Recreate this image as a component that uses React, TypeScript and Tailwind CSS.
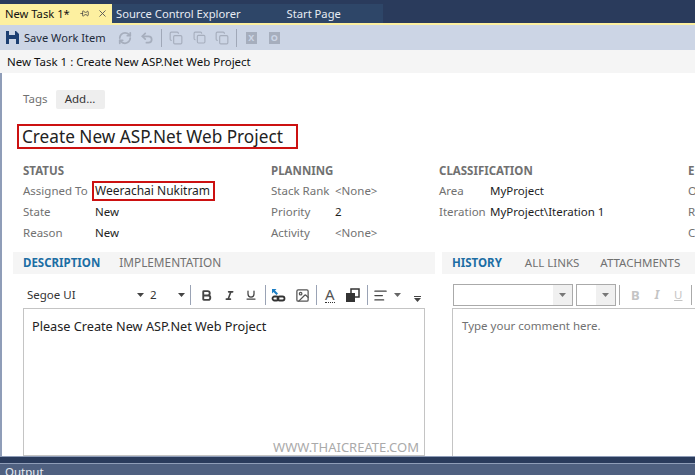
import React from "react";
import { Undo2, RefreshCw, Pin, X, Copy, Image, AlignLeft, Bold, Italic, Underline } from "lucide-react";

const Caret = ({ c = "#444" }: { c?: string }) => (
  <svg width="7" height="4" viewBox="0 0 7 4"><path d="M0 0h7L3.5 4z" fill={c} /></svg>
);
const Sep = ({ c = "#9aa3b5" }: { c?: string }) => <div className="w-px h-[20px]" style={{ background: c }} />;

const Field = ({ l, v, w, muted }: { l: string; v: string; w: string; muted?: boolean }) => (
  <div className="flex items-center h-[21px]">
    <span className={`${w} text-[#717171] shrink-0`}>{l}</span>
    <span className={muted ? "text-[#717171]" : "text-[#1e1e1e]"}>{v}</span>
  </div>
);

const Stack = () => (
  <svg width="15" height="15" viewBox="0 0 15 15" className="ml-[5px]">
    <path d="M1 1h4.5l-1.5 1.5 3 3-1.5 1.5-3-3L1 5.500z" fill="#1c7ec4" />
    <rect x="1.500" y="8.500" width="6" height="4" rx="2" fill="none" stroke="#333" strokeWidth="1.800" />
    <rect x="6.500" y="8.500" width="7" height="4" rx="2" fill="none" stroke="#333" strokeWidth="1.800" />
  </svg>
);

const Layers = () => (
  <svg width="14" height="14" viewBox="0 0 14 14" className="ml-[11px]">
    <rect x="5" y="1" width="8" height="8" fill="#fff" stroke="#333" strokeWidth="1.500" />
    <rect x="0" y="5" width="9" height="9" fill="#333" />
  </svg>
);

export default function App() {
  return (
    <div className="w-[695px] h-[475px] overflow-hidden flex flex-col bg-white text-[11.5px] leading-none text-[#1e1e1e]" style={{ fontFamily: '"Noto Sans", "Open Sans", sans-serif' }}>
      <div className="h-[23px] bg-[#2a3b5c] pt-[4px] flex shrink-0 text-[11.2px]">
        <div className="w-[112px] bg-[#fdf0a0] flex items-center pl-[5px] text-[#111] whitespace-nowrap">
          <span className="w-[75px]">New Task 1*</span>
          <Pin size={9} className="rotate-90 text-[#444]" />
          <X size={11} className="ml-[8px] text-[#555]" />
        </div>
        <div className="w-[271px] bg-[#2e4668] flex items-center pl-[4px] text-[#e8ecf3]">
          <span>Source Control Explorer</span>
          <span className="ml-[46px]">Start Page</span>
        </div>
      </div>
      <div className="h-[2px] bg-[#fdf0a0] shrink-0" />
      <div className="h-[25px] bg-[#ccd5e5] flex items-center shrink-0 pl-[6px] text-[11.1px]">
        <svg width="13" height="13" viewBox="0 0 13 13"><path d="M0 0h10l3 3v10H0z" fill="#1d3f72" /><path d="M3 0h6v4H3z" fill="#ccd5e5" /><path d="M3 8h7v5H3z" fill="#ccd5e5" /></svg>
        <span className="ml-[5px] text-[#1e2a3a]">Save Work Item</span>
        <RefreshCw size={14} strokeWidth={3} className="ml-[12px] text-[#a6aebd]" />
        <Undo2 size={14} strokeWidth={3} className="ml-[8px] text-[#a6aebd]" />
        <div className="ml-[7px] w-px h-[18px] bg-[#a0a8b8]" />
        <Copy size={14} className="ml-[7px] text-[#a6aebd]" />
        <Copy size={13} className="ml-[10px] text-[#a6aebd]" />
        <Copy size={14} className="ml-[9px] text-[#a6aebd]" />
        <div className="ml-[7px] w-px h-[18px] bg-[#a0a8b8]" />
        <div className="ml-[9px] w-[11px] h-[12px] bg-[#a6aebd] text-[#ccd5e5] text-[9px] font-bold flex items-center justify-center">X</div>
        <div className="ml-[12px] w-[11px] h-[12px] bg-[#a6aebd] text-[#ccd5e5] text-[9px] font-bold flex items-center justify-center">O</div>
      </div>
      <div className="h-[23px] bg-[#f5f5f5] flex items-center pl-[7px] shrink-0 text-[#111]">New Task 1 : Create New ASP.Net Web Project</div>

      <div className="flex-1 min-h-0 flex flex-col border-l-2 border-[#8f9db8]">
        <div className="flex items-center pl-[21px] pt-[16px] h-[36px] shrink-0">
          <span className="text-[#717171]">Tags</span>
          <div className="ml-[8px] w-[49px] h-[19px] bg-[#eeeeee] rounded-[2px] flex items-center justify-center text-[#333]">Add...</div>
        </div>
        <div className="ml-[15px] mt-[15px] w-[281px] h-[25px] border-[2px] border-[#cc1111] flex items-center pl-[3px] text-[17.2px] text-[#222] shrink-0">Create New ASP.Net Web Project</div>

        <div className="flex mt-[14px] pl-[21px] shrink-0 h-[89px]">
          <div className="w-[248px] shrink-0">
            <div className="font-bold text-[#717171] h-[16px] flex items-center">STATUS</div>
            <div className="flex items-center h-[21px] mt-[1px]">
              <span className="w-[69px] text-[#717171] shrink-0">Assigned To</span>
              <div className="w-[123px] h-[20px] border-[2px] border-[#cc1111] flex items-center pl-[1px] text-[12px]">Weerachai Nukitram</div>
            </div>
            <Field l="State" v="New" w="w-[72px]" />
            <Field l="Reason" v="New" w="w-[72px]" />
          </div>
          <div className="w-[168px] shrink-0">
            <div className="font-bold text-[#717171] h-[16px] flex items-center">PLANNING</div>
            <div className="mt-[1px]">
              <Field l="Stack Rank" v="<None>" w="w-[64px]" muted />
              <Field l="Priority" v="2" w="w-[64px]" />
              <Field l="Activity" v="<None>" w="w-[64px]" muted />
            </div>
          </div>
          <div className="w-[249px] shrink-0">
            <div className="font-bold text-[#717171] h-[16px] flex items-center">CLASSIFICATION</div>
            <div className="mt-[1px]">
              <Field l="Area" v="MyProject" w="w-[51px]" />
              <Field l="Iteration" v="MyProject\Iteration 1" w="w-[51px]" />
            </div>
          </div>
          <div className="shrink-0">
            <div className="font-bold text-[#717171] h-[16px] flex items-center">EFFORT</div>
            <div className="mt-[1px] text-[#717171]">
              <div className="h-[21px] flex items-center">Original</div>
              <div className="h-[21px] flex items-center">Remaining</div>
              <div className="h-[21px] flex items-center">Completed</div>
            </div>
          </div>
        </div>

        <div className="flex flex-1 min-h-0">
          <div className="w-[433px] shrink-0 pl-[11px] flex flex-col">
            <div className="w-[422px] h-[22px] bg-[#f5f5f5] flex items-center pl-[10px] shrink-0">
              <span className="font-bold text-[#1c6ea4]">DESCRIPTION</span>
              <span className="ml-[19px] text-[11.8px] text-[#717171]">IMPLEMENTATION</span>
            </div>
            <div className="h-[32px] pt-[10px] pl-[14px] flex items-center shrink-0 text-[#333]">
              <span className="w-[110px]">Segoe UI</span>
              <Caret />
              <span className="ml-[6px] w-[28px]">2</span>
              <Caret />
              <div className="ml-[5px]"><Sep /></div>
              <Bold size={13} strokeWidth={3.5} className="ml-[9px] text-[#444]" />
              <Italic size={11} strokeWidth={3.5} className="ml-[11px] text-[#444]" />
              <Underline size={12} strokeWidth={2.5} className="ml-[10px] text-[#444]" />
              <div className="ml-[8px]"><Sep /></div>
              <Stack />
              <Image size={15} className="ml-[9px] text-[#555]" />
              <div className="ml-[6px]"><Sep /></div>
              <span className="ml-[8px] text-[15px] text-[#555] border-b border-dotted border-[#333]">A</span>
              <Layers />
              <div className="ml-[7px]"><Sep /></div>
              <AlignLeft size={15} strokeWidth={2} className="ml-[5px] text-[#444]" />
              <div className="ml-[6px]"><Caret c="#666" /></div>
              <div className="ml-[13px] mt-[8px] flex flex-col items-center gap-[1px]">
                <div className="w-[7px] h-px bg-[#444]" />
                <Caret c="#444" />
              </div>
            </div>
            <div className="mt-[2px] ml-[10px] w-[402px] flex-1 min-h-0 border border-[#c4c4c4] relative pl-[8px] pt-[11px] text-[12.7px] text-[#222]">
              Please Create New ASP.Net Web Project
              <span className="absolute right-[5px] bottom-[1px] text-[13px] text-[#aaaaaa]">WWW.THAICREATE.COM</span>
            </div>
          </div>
          <div className="flex-1 min-w-0 flex flex-col pl-[7px]">
            <div className="h-[22px] bg-[#f5f5f5] flex items-center pl-[10px] shrink-0 whitespace-nowrap overflow-hidden">
              <span className="font-bold text-[#1c6ea4]">HISTORY</span>
              <span className="ml-[23px] text-[#717171]">ALL LINKS</span>
              <span className="ml-[21px] text-[#717171]">ATTACHMENTS</span>
            </div>
            <div className="h-[32px] pt-[10px] pl-[11px] flex items-center shrink-0 overflow-hidden">
              <div className="w-[120px] h-[22px] border border-[#aaaaaa] flex shrink-0">
                <div className="flex-1 bg-white" />
                <div className="w-[19px] bg-[#f0f0f0] flex items-center justify-center"><Caret c="#777" /></div>
              </div>
              <div className="ml-[3px] w-[40px] h-[22px] border border-[#aaaaaa] flex shrink-0">
                <div className="flex-1 bg-white" />
                <div className="w-[19px] bg-[#f0f0f0] flex items-center justify-center"><Caret c="#777" /></div>
              </div>
              <div className="ml-[3px]"><Sep c="#aaaaaa" /></div>
              <span className="ml-[11px] font-bold text-[#c4c4c4] text-[13px]">B</span>
              <span className="ml-[15px] italic font-bold text-[#c4c4c4]">I</span>
              <span className="ml-[15px] underline text-[#c4c4c4]">U</span>
              <div className="ml-[9px]"><Sep c="#aaaaaa" /></div>
            </div>
            <div className="mt-[2px] ml-[10px] flex-1 min-h-0 border-l border-t border-[#c4c4c4] pl-[9px] pt-[11px] text-[#717171]">Type your comment here.</div>
          </div>
        </div>
      </div>
      <div className="h-px bg-[#8f9db8] shrink-0" />
      <div className="h-[6px] bg-[#2a3b5c] shrink-0" />
      <div className="h-px bg-[#8f9db8] shrink-0" />
      <div className="h-[11px] bg-[#4f6080] pl-[5px] pt-[2px] text-[#e8ecf3] shrink-0 overflow-hidden">Output</div>
    </div>
  );
}
